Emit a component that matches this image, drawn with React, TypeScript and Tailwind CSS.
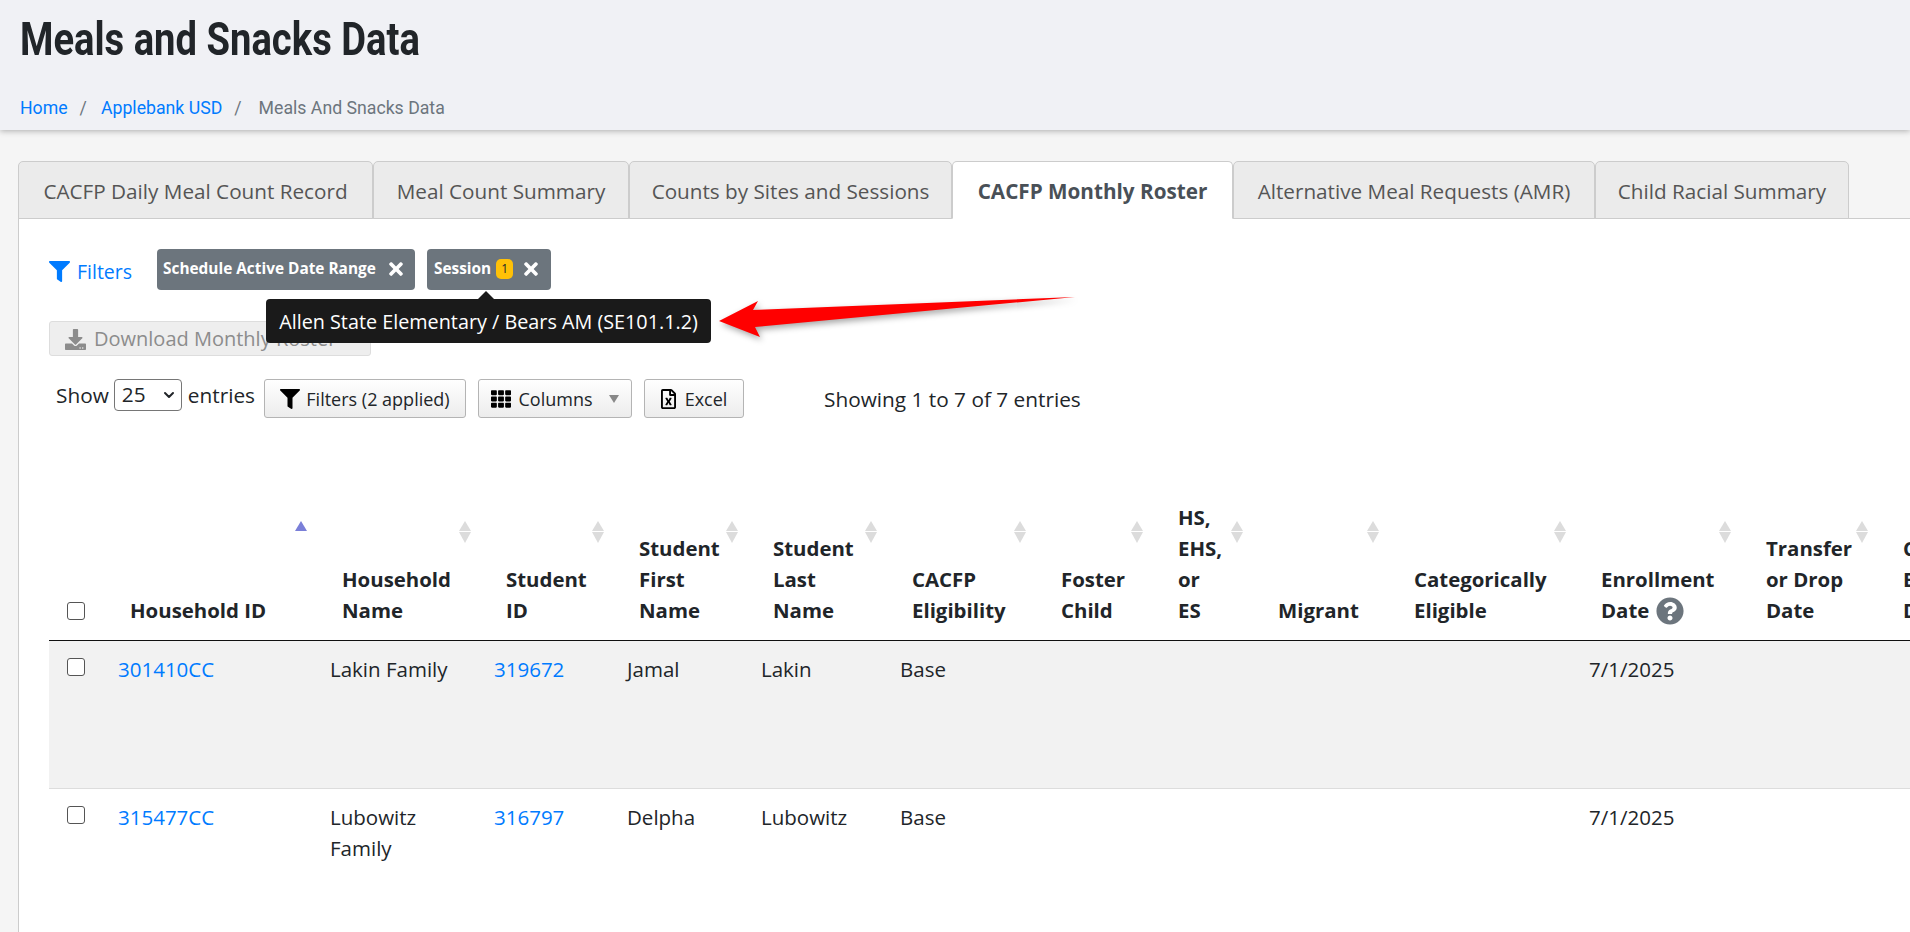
import React from 'react';
import { ChevronDown } from 'lucide-react';
import { FaDownload, FaFilter, FaQuestionCircle, FaTh, FaTimes, FaRegFileExcel } from 'react-icons/fa';

const tabs = [
  { label: 'CACFP Daily Meal Count Record', width: 'w-[355px]' },
  { label: 'Meal Count Summary', width: 'w-[256px]' },
  { label: 'Counts by Sites and Sessions', width: 'w-[323px]' },
  { label: 'CACFP Monthly Roster', width: 'w-[281px]', active: true },
  { label: 'Alternative Meal Requests (AMR)', width: 'w-[362px]' },
  { label: 'Child Racial Summary', width: 'w-[254px]' },
];

const columns = [
  { label: ['Household ID'], width: 'w-[212px]', active: true },
  { label: ['Household', 'Name'], width: 'w-[164px]' },
  { label: ['Student', 'ID'], width: 'w-[133px]' },
  { label: ['Student', 'First', 'Name'], width: 'w-[134px]' },
  { label: ['Student', 'Last', 'Name'], width: 'w-[139px]' },
  { label: ['CACFP', 'Eligibility'], width: 'w-[149px]' },
  { label: ['Foster', 'Child'], width: 'w-[117px]' },
  { label: ['HS,', 'EHS,', 'or', 'ES'], width: 'w-[100px]' },
  { label: ['Migrant'], width: 'w-[136px]' },
  { label: ['Categorically', 'Eligible'], width: 'w-[187px]' },
  { label: ['Enrollment', 'Date'], width: 'w-[165px]', help: true },
  { label: ['Transfer', 'or Drop', 'Date'], width: 'w-[137px]' },
  { label: ['CACFP', 'Begin', 'Date'], width: 'w-[137px]' },
];

const rows = [
  { household: '301410CC', name: ['Lakin Family'], id: '319672', first: 'Jamal', last: 'Lakin', bg: 'bg-[#f2f2f2]' },
  { household: '315477CC', name: ['Lubowitz', 'Family'], id: '316797', first: 'Delpha', last: 'Lubowitz', bg: 'bg-white' },
];

function SortIcon({ active }: { active?: boolean }) {
  return (
    <span className="absolute right-[11px] top-[19px] flex flex-col gap-[1px]">
      <span className={`h-0 w-0 border-x-[6px] border-b-[10px] border-x-transparent ${active ? 'border-b-[#7a7fd8]' : 'border-b-[#dcdcdc]'}`} />
      <span className={`h-0 w-0 border-x-[6px] border-t-[11px] border-x-transparent ${active ? 'border-t-transparent' : 'border-t-[#dcdcdc]'}`} />
    </span>
  );
}

function Checkbox() {
  return <span className="block h-[18px] w-[18px] rounded-[3px] border border-[#555] bg-white" />;
}

function ToolButton({ children }: { children: React.ReactNode }) {
  return (
    <button className="flex h-[39px] items-center rounded-[3px] border border-[#b4b4b4] bg-gradient-to-b from-white to-[#ececec] pt-[1px] text-[18px] text-[#212529]">
      {children}
    </button>
  );
}

export default function App() {
  return (
    <div className="relative h-screen overflow-hidden bg-[#f5f5f5] font-['Open_Sans','Noto_Sans',sans-serif] text-[20.5px] text-[#212529]">
      {/* Page header */}
      <header className="h-[130px] bg-[#f0f1f5] px-[20px] pt-[13px] font-['Roboto',sans-serif] shadow-[0_1px_6px_rgba(0,0,0,0.3)]">
        <h1 className="origin-left scale-x-[0.83] whitespace-nowrap text-[46px] font-bold leading-[52px] text-[#212529]">Meals and Snacks Data</h1>
        <nav className="mt-[31px] flex items-center text-[17.7px] leading-[24px]">
          <a className="text-[#007bff]">Home</a>
          <span className="mx-[12px] text-[#6c757d]">/</span>
          <a className="ml-[2px] text-[#007bff]">Applebank USD</a>
          <span className="mx-[12px] text-[#6c757d]">/</span>
          <span className="ml-[5px] text-[#6c757d]">Meals And Snacks Data</span>
        </nav>
      </header>

      <main className="ml-[18px] mt-[31px]">
        {/* Tabs */}
        <div className="flex h-[58px] border-b border-[#ccc]">
          {tabs.map((tab) => (
            <div
              key={tab.label}
              className={`flex h-[58px] shrink-0 items-center justify-center rounded-t-[5px] border border-[#ccc] pt-[3px] text-[20.7px] ${tab.width} ${
                tab.active ? 'border-b-white bg-white font-bold text-[#495057]' : 'bg-[#ebebeb] text-[#555]'
              }`}
            >
              {tab.label}
            </div>
          ))}
        </div>

        {/* Panel */}
        <section className="h-[720px] border-l border-[#ccc] bg-white pl-[30px]">
          <div className="flex h-[102px] items-start pt-[30px]">
            <div className="mt-[8px] flex w-[108px] items-center gap-[7px] text-[19.5px] text-[#007bff]">
              <FaFilter className="h-[21px] w-[21px]" />
              Filters
            </div>
            <div className="flex h-[41px] w-[258px] items-center justify-between rounded-[4px] bg-[#6c757d] pb-[2px] pl-[6px] pr-[9px] text-[15.4px] font-bold text-white">
              Schedule Active Date Range
              <FaTimes className="h-[20px] w-[20px]" />
            </div>
            <div className="ml-[12px] flex h-[41px] w-[124px] items-center rounded-[4px] bg-[#6c757d] pb-[2px] pl-[7px] text-[15.4px] font-bold text-white">
              Session
              <span className="ml-[5px] rounded-[5px] bg-[#ffc107] px-[5px] text-[12px] font-normal leading-[20px] text-[#212529]">1</span>
              <FaTimes className="ml-[8px] h-[20px] w-[20px]" />
            </div>
          </div>

          <button className="flex h-[35px] w-[322px] items-center rounded-[3px] border border-[#ddd] bg-[#eeeeee] pl-[15px] pt-[1px] text-[20px] text-[#8c8c8c]">
            <FaDownload className="mr-[8px] h-[21px] w-[21px]" />
            Download Monthly Roster
          </button>

          <div className="ml-[7px] mt-[23px] flex items-start text-[20.8px]">
            <span className="leading-[32px]">Show</span>
            <span className="ml-[5px] mr-[6px] flex h-[32px] w-[68px] items-center justify-between rounded-[4px] border border-[#767676] bg-white pl-[7px] pr-[4px]">
              25
              <ChevronDown className="h-[16px] w-[16px]" strokeWidth={3} />
            </span>
            <span className="leading-[32px]">entries</span>
            <div className="ml-[9px] flex gap-[12px]">
              <ToolButton>
                <span className="flex w-[200px] items-center justify-center gap-[6px]">
                  <FaFilter className="h-[20px] w-[20px] text-black" />
                  Filters (2 applied)
                </span>
              </ToolButton>
              <ToolButton>
                <span className="flex w-[152px] items-center justify-center">
                  <FaTh className="mr-[7px] h-[20px] w-[20px] text-black" />
                  Columns
                  <span className="ml-[16px] h-0 w-0 border-x-[5px] border-t-[8px] border-x-transparent border-t-[#888]" />
                </span>
              </ToolButton>
              <ToolButton>
                <span className="flex w-[98px] items-center justify-center gap-[9px]">
                  <FaRegFileExcel className="h-[20px] w-[15px] text-black" />
                  Excel
                </span>
              </ToolButton>
            </div>
            <span className="ml-[80px] mt-[4px] leading-[32px]">Showing 1 to 7 of 7 entries</span>
          </div>

          {/* Table */}
          <table className="mt-[84px] w-[1967px] table-fixed border-collapse">
            <thead>
              <tr className="border-b border-[#111]">
                <th className="w-[57px] pb-[20px] pl-[18px] align-bottom">
                  <Checkbox />
                </th>
                {columns.map((col) => (
                  <th key={col.label.join(' ')} className={`relative pb-[14px] pl-[24px] text-left align-bottom text-[20.4px] font-bold leading-[31px] ${col.width}`}>
                    {col.label.map((line, i) => (
                      <div key={line} className="flex h-[31px] items-center whitespace-nowrap">
                        {line}
                        {col.help && i === col.label.length - 1 && <FaQuestionCircle className="ml-[7px] h-[28px] w-[28px] text-[#6c757d]" />}
                      </div>
                    ))}
                    <SortIcon active={col.active} />
                  </th>
                ))}
              </tr>
            </thead>
            <tbody>
              {rows.map((row) => (
                <tr key={row.id} className={`h-[148px] border-b border-[#ddd] ${row.bg}`}>
                  <td className="pl-[18px] pt-[17px] align-top">
                    <Checkbox />
                  </td>
                  <td className="pl-[12px] pt-[13px] align-top leading-[31px] text-[#007bff]">{row.household}</td>
                  <td className="pl-[12px] pt-[13px] align-top leading-[31px]">
                    {row.name.map((line) => (
                      <div key={line}>{line}</div>
                    ))}
                  </td>
                  <td className="pl-[12px] pt-[13px] align-top leading-[31px] text-[#007bff]">{row.id}</td>
                  <td className="pl-[12px] pt-[13px] align-top leading-[31px]">{row.first}</td>
                  <td className="pl-[12px] pt-[13px] align-top leading-[31px]">{row.last}</td>
                  <td className="pl-[12px] pt-[13px] align-top leading-[31px]">Base</td>
                  <td colSpan={4} />
                  <td className="pl-[12px] pt-[13px] align-top leading-[31px]">7/1/2025</td>
                  <td colSpan={2} />
                </tr>
              ))}
            </tbody>
          </table>
        </section>
      </main>

      {/* Tooltip over the filter chip */}
      <div className="absolute left-[266px] top-[291px]">
        <span className="absolute left-[212px] top-0 h-0 w-0 border-x-[8px] border-b-[8px] border-x-transparent border-b-[#1a1a1a]" />
        <div className="mt-[8px] flex h-[44px] w-[445px] items-center justify-center whitespace-nowrap rounded-[4px] bg-[#1a1a1a] pt-[2px] text-[19.8px] text-white">
          Allen State Elementary / Bears AM (SE101.1.2)
        </div>
      </div>

      {/* Annotation arrow */}
      <svg className="absolute left-[715px] top-[290px] drop-shadow-[2px_3px_3px_rgba(0,0,0,0.35)]" width="365" height="55" viewBox="0 0 365 55">
        <path d="M4 31 L43 11 L38 20 L360 7 L40 37 L45 47 Z" fill="#ff0000" />
      </svg>
    </div>
  );
}
